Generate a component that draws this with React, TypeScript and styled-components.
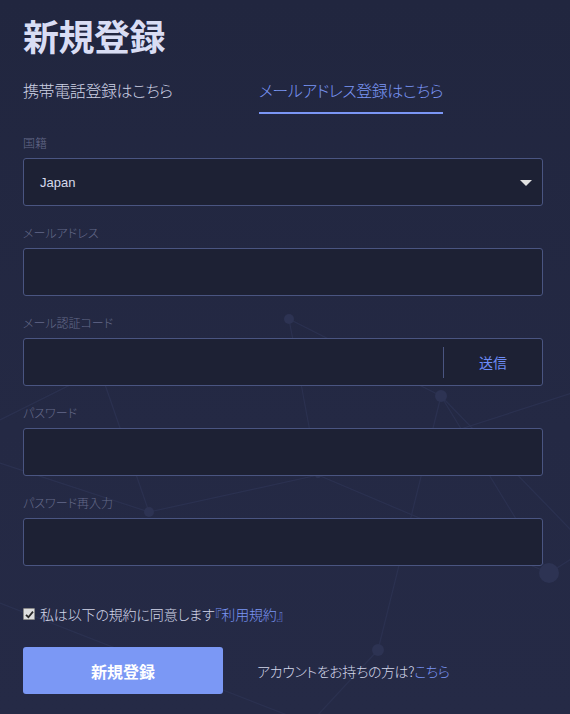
import React from "react";
import styled, { createGlobalStyle } from "styled-components";

const GlobalStyle = createGlobalStyle`
  html, body {
    margin: 0;
    padding: 0;
    background: #232843;
  }
  * { box-sizing: border-box; }
`;

const FONT = `"Noto Sans CJK JP", "Liberation Sans", sans-serif`;

const Page = styled.div`
  position: relative;
  min-height: 714px;
  overflow: hidden;
  background: linear-gradient(180deg, #21263f 0%, #242944 60%, #252a46 100%);
  font-family: ${FONT};
  font-feature-settings: "palt";
  font-weight: 300;
`;

const Backdrop = styled.svg`
  position: absolute;
  inset: 0;
  width: 570px;
  height: 714px;
  z-index: 0;
  pointer-events: none;
`;

const Content = styled.div`
  position: relative;
  z-index: 1;
  padding: 17px 27px 0 23px;
  display: flex;
  flex-direction: column;
`;

const Title = styled.h1`
  margin: 0;
  font-size: 36px;
  line-height: 36px;
  font-weight: 700;
  color: #d9ddf4;
  letter-spacing: -0.5px;
`;

const TabBar = styled.div`
  margin-top: 29px;
  display: grid;
  grid-template-columns: 236px auto;
  justify-content: start;
`;

const Tab = styled.div<{ $active?: boolean }>`
  font-size: 16px;
  line-height: 16px;
  padding-bottom: 14px;
  letter-spacing: ${(p) => (p.$active ? "-0.5px" : "-0.4px")};
  color: ${(p) => (p.$active ? "#7b96f5" : "#cdd1e4")};
  border-bottom: 2px solid ${(p) => (p.$active ? "#7b96f5" : "transparent")};
  justify-self: start;
`;

const Form = styled.div`
  margin-top: 23px;
  display: flex;
  flex-direction: column;
  gap: 21px;
`;

const Field = styled.div`
  display: flex;
  flex-direction: column;
`;

const Label = styled.div`
  font-size: 12px;
  line-height: 12px;
  color: #646a8a;
  margin-bottom: 9px;
`;

const Box = styled.div`
  height: 48px;
  width: 520px;
  border: 1px solid #4a5581;
  border-radius: 3px;
  background: #1d2134;
  display: flex;
  align-items: center;
`;

const SelectText = styled.span`
  flex: 1;
  padding-left: 16px;
  font-family: "Liberation Sans", "Noto Sans CJK JP", sans-serif;
  font-weight: 400;
  font-size: 13px;
  color: #d6daec;
`;

const Caret = styled.svg`
  width: 12px;
  height: 6px;
  margin-right: 10px;
  margin-top: 1px;
`;

const Divider = styled.div`
  width: 1px;
  height: 31px;
  background: #4a5581;
`;

const SendButton = styled.div`
  width: 98px;
  text-align: center;
  font-size: 14px;
  line-height: 14px;
  font-weight: 400;
  color: #6e8cf7;
`;

const Spacer = styled.div`
  flex: 1;
`;

const AgreeRow = styled.div`
  margin-top: 41px;
  display: flex;
  align-items: center;
  gap: 5px;
  font-size: 14px;
  line-height: 14px;
  letter-spacing: -0.15px;
  color: #d3d7ea;
`;

const Check = styled.span`
  width: 12px;
  height: 12px;
  border: 1px solid #8a8a8a;
  border-radius: 1px;
  background: #dedede;
  display: inline-flex;
  align-items: center;
  justify-content: center;
`;

const Link = styled.span`
  color: #7b96f5;
`;

const ActionRow = styled.div`
  margin-top: 26px;
  display: flex;
  align-items: center;
  gap: 34px;
`;

const PrimaryButton = styled.button`
  width: 200px;
  height: 47px;
  border: none;
  border-radius: 3px;
  background: #7b98f5;
  color: #ffffff;
  font-family: ${FONT};
  font-feature-settings: "palt";
  font-size: 16px;
  font-weight: 700;
  cursor: pointer;
`;

const LoginText = styled.span`
  font-size: 14px;
  line-height: 14px;
  letter-spacing: -0.4px;
  color: #d3d7ea;
`;

type Node = { x: number; y: number; r: number };

const nodes: Record<string, Node> = {
  A: { x: 289, y: 319, r: 5 },
  B: { x: 441, y: 396, r: 6 },
  C: { x: 149, y: 512, r: 5 },
  D: { x: 549, y: 573, r: 10 },
  E: { x: 378, y: 650, r: 6 },
  F: { x: 318, y: 475, r: 3 },
  G: { x: 100, y: 370, r: 3 },
};

const edges: [number, number, number, number][] = [
  [289, 319, 441, 396],
  [289, 319, 318, 475],
  [441, 396, 378, 650],
  [441, 396, 549, 573],
  [441, 396, 600, 560],
  [318, 475, 600, 384],
  [149, 512, 318, 475],
  [318, 475, 549, 573],
  [0, 463, 149, 512],
  [149, 512, 100, 370],
  [100, 370, 0, 420],
  [0, 603, 300, 720],
  [378, 650, 304, 730],
  [549, 573, 600, 541],
];

const Network = () => (
  <Backdrop viewBox="0 0 570 714">
    {edges.map(([x1, y1, x2, y2], i) => (
      <line key={i} x1={x1} y1={y1} x2={x2} y2={y2} stroke="#2b3150" strokeWidth={1.2} />
    ))}
    {Object.entries(nodes).map(([k, n]) => (
      <circle key={k} cx={n.x} cy={n.y} r={n.r} fill="#2d3353" />
    ))}
  </Backdrop>
);

const CheckIcon = () => (
  <svg width="9" height="9" viewBox="0 0 9 9">
    <path d="M1 4.8 L3.4 7.2 L8 1.6" fill="none" stroke="#2a2a2a" strokeWidth={1.8} />
  </svg>
);

export default function App() {
  return (
    <>
      <GlobalStyle />
      <Page>
        <Network />
        <Content>
          <Title>新規登録</Title>
          <TabBar>
            <Tab>携帯電話登録はこちら</Tab>
            <Tab $active>メールアドレス登録はこちら</Tab>
          </TabBar>
          <Form>
            <Field>
              <Label>国籍</Label>
              <Box>
                <SelectText>Japan</SelectText>
                <Caret viewBox="0 0 12 6">
                  <path d="M0 0 H12 L6 6 Z" fill="#e2e2e2" />
                </Caret>
              </Box>
            </Field>
            <Field>
              <Label>メールアドレス</Label>
              <Box />
            </Field>
            <Field>
              <Label>メール認証コード</Label>
              <Box>
                <Spacer />
                <Divider />
                <SendButton>送信</SendButton>
              </Box>
            </Field>
            <Field>
              <Label>パスワード</Label>
              <Box />
            </Field>
            <Field>
              <Label>パスワード再入力</Label>
              <Box />
            </Field>
          </Form>
          <AgreeRow>
            <Check>
              <CheckIcon />
            </Check>
            <span>
              私は以下の規約に同意します<Link>『利用規約』</Link>
            </span>
          </AgreeRow>
          <ActionRow>
            <PrimaryButton>新規登録</PrimaryButton>
            <LoginText>
              アカウントをお持ちの方は?<Link>こちら</Link>
            </LoginText>
          </ActionRow>
        </Content>
      </Page>
    </>
  );
}
